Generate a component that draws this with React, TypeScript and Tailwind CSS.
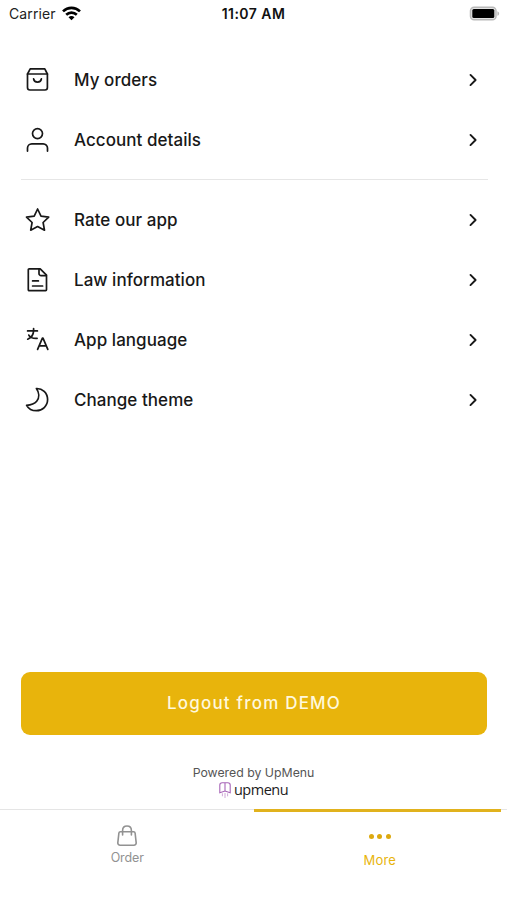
import React from 'react';

type IconProps = { children: React.ReactNode };

const MenuIcon = ({ children }: IconProps) => (
  <svg
    className="h-[26px] w-[26px]"
    viewBox="0 0 26 26"
    fill="none"
    stroke="currentColor"
    strokeWidth={1.7}
    strokeLinecap="round"
    strokeLinejoin="round"
  >
    {children}
  </svg>
);

const OrdersIcon = () => (
  <MenuIcon>
    <path d="M5.2 1.9h14.6L22.4 7v13.6a2.4 2.4 0 0 1-2.4 2.4H4.9a2.4 2.4 0 0 1-2.4-2.4V7Z" />
    <path d="M2.5 7h19.9M8.6 11.9c.6 4.2 7.2 4.2 7.8 0" />
  </MenuIcon>
);

const AccountIcon = () => (
  <MenuIcon>
    <circle cx="12.5" cy="6.6" r="5" />
    <path d="M2.5 24.1v-3a4.3 4.3 0 0 1 4.3-4.3h11.4a4.3 4.3 0 0 1 4.3 4.3v3" />
  </MenuIcon>
);

const StarIcon = () => (
  <MenuIcon>
    <path d="M12.6 2l3.4 7.1 7.7 1-5.6 5.4 1.4 7.7-6.9-3.7-6.9 3.7 1.4-7.7-5.6-5.4 7.7-1Z" />
  </MenuIcon>
);

const LawIcon = () => (
  <MenuIcon>
    <path d="M4.2 1.8h11l6.3 6.4v14.5a.9.9 0 0 1-.9.9H4.2a.9.9 0 0 1-.9-.9v-20a.9.9 0 0 1 .9-.9Z" />
    <path d="M14 2.1v4.4a2.1 2.1 0 0 0 2.1 2.1h5.2M7.6 13.9h5.8M7.6 19h10" />
  </MenuIcon>
);

const LanguageIcon = () => (
  <MenuIcon>
    <path d="M2.6 3.9h9.8M8.6 1.5v2.4M8.6 3.9c-.2 4.1-2.3 6.9-5.9 8.3M3.8 8.1c1.4 2.8 4.3 3.5 8.3 3.3" />
    <path d="M12.6 22.4l4.8-11.2h.6l4.8 11.2M14.2 18.9h7" />
  </MenuIcon>
);

const MoonIcon = () => (
  <MenuIcon>
    <path d="M11.4 1.5c5.8-.3 11.2 4.4 11.2 11.1 0 6.4-5.2 11.1-11.2 11.1-4.3 0-7.9-2-9.8-5.4 4.5-.2 7.9-1.3 10.1-4 2.9-3.6 2.6-8.7-.3-12.8Z" />
  </MenuIcon>
);

const Chevron = () => (
  <svg className="h-3.5 w-2.5" viewBox="0 0 10 14" fill="none" stroke="currentColor" strokeWidth={1.9}>
    <path d="M2.5 1.9L7.6 7l-5.1 5.1" strokeLinecap="round" strokeLinejoin="round" />
  </svg>
);

const accountItems = [
  { label: 'My orders', icon: OrdersIcon },
  { label: 'Account details', icon: AccountIcon },
];

const appItems = [
  { label: 'Rate our app', icon: StarIcon },
  { label: 'Law information', icon: LawIcon },
  { label: 'App language', icon: LanguageIcon },
  { label: 'Change theme', icon: MoonIcon },
];

const MenuRow = ({ label, icon: Icon }: { label: string; icon: () => React.ReactNode }) => (
  <button className="flex h-[60px] w-full items-center pr-[29px] pl-[25px] text-[#181818]">
    <Icon />
    <span className="ml-[23px] flex-1 text-left text-[17px] leading-6 font-medium tracking-[0.05px]">
      {label}
    </span>
    <Chevron />
  </button>
);

const StatusBar = () => (
  <div className="grid h-[27px] grid-cols-3 items-center pr-[7px] pl-[9px] text-sm">
    <div className="flex items-center gap-1.5 text-[#222]">
      <span className="tracking-[0.1px]">Carrier</span>
      <svg className="h-[15px] w-[19px]" viewBox="0 0 19 15" fill="none" stroke="#000" strokeWidth={2.6}>
        <path d="M1 5.4C5.8.7 13.2.7 18 5.4M4.2 8.8c3-2.9 7.6-2.9 10.6 0" />
        <path d="M9.5 14.2l-3-3c1.7-1.6 4.3-1.6 6 0Z" fill="#000" stroke="none" />
      </svg>
    </div>
    <span className="-ml-0.5 text-center font-semibold tracking-[0.45px] text-[#111]">11:07 AM</span>
    <svg className="h-4 w-[31px] justify-self-end" viewBox="0 0 31 16">
      <rect x="1.5" y="1.2" width="25.5" height="12.6" rx="3.6" fill="#e4e4e4" stroke="#b9b9b9" strokeWidth={1.5} />
      <rect x="3.3" y="3" width="22" height="9" rx="1.5" fill="#000" />
      <path d="M28.4 5.2c2.3.8 2.3 3.8 0 4.6Z" fill="#b9b9b9" />
    </svg>
  </div>
);

export default function App() {
  return (
    <div className="flex h-[900px] w-full flex-col bg-white font-['Inter','Liberation_Sans',sans-serif]">
      <StatusBar />

      <div className="mt-[23px]">
        {accountItems.map((item) => (
          <MenuRow key={item.label} label={item.label} icon={item.icon} />
        ))}
        <div className="mr-[19px] mb-2.5 ml-[21px] pt-[9px]">
          <div className="h-px bg-[#e6e6e6]" />
        </div>
        {appItems.map((item) => (
          <MenuRow key={item.label} label={item.label} icon={item.icon} />
        ))}
      </div>

      <div className="mt-auto">
        <div className="pr-5 pl-[21px]">
          <button className="h-[63px] w-full rounded-[9px] bg-[#e8b40c] pt-px text-[17px] font-medium tracking-[1.2px] text-[#fff8dc]">
            Logout from DEMO
          </button>
        </div>

        <div className="mt-[30px] flex flex-col items-center">
          <span className="text-[12.3px] leading-4 text-[#555]">Powered by UpMenu</span>
          <div className="flex h-[17px] items-center gap-[3px]">
            <svg className="h-4 w-3" viewBox="0 0 12 16" fill="none" stroke="#a866b8" strokeWidth={1.1}>
              <path d="M.8 10.7V3C.8 1.6 1.8.8 3.2.8h5.6c1.4 0 2.4.8 2.4 2.2v7.7L6 9 .8 10.7ZM6 .8V9" />
              <path d="M3.4 11.3v3M6 11v5M8.6 11.3v3" strokeWidth={0.8} opacity={0.7} />
            </svg>
            <span className="font-['Open_Sans','Noto_Sans',sans-serif] text-[14.5px] leading-4 font-medium tracking-[-0.5px] text-[#1c1c1c]">
              upmenu
            </span>
          </div>
        </div>
      </div>

      <nav className="mt-[11px] grid h-[91px] shrink-0 grid-cols-2 border-t border-[#e5e5e5] text-[12.5px]">
        <button className="flex flex-col items-center pt-[15px] pl-px text-[#929292]">
          <svg className="h-[22px] w-[22px]" viewBox="0 0 22 22" fill="none" stroke="currentColor" strokeWidth={1.6}>
            <path d="M4.4 6.7h13.2a1.5 1.5 0 0 1 1.5 1.3l1.1 9.8a2.3 2.3 0 0 1-2.3 2.5H4.1a2.3 2.3 0 0 1-2.3-2.5L2.9 8a1.5 1.5 0 0 1 1.5-1.3Z" />
            <path d="M6.6 10V5.5C6.6 2.8 8.3 1 11 1s4.4 1.8 4.4 4.5V10" strokeLinecap="round" />
          </svg>
          <span className="mt-[3px] leading-4 tracking-[-0.1px]">Order</span>
        </button>
        <button className="-mt-px mr-1.5 flex flex-col items-center border-t-3 border-[#e1b21d] pl-[5px] text-[#e8b40c]">
          <span className="mt-[22px] flex gap-[3.5px]">
            <span className="h-[5px] w-[5px] rounded-full bg-[#dda90f]" />
            <span className="h-[5px] w-[5px] rounded-full bg-[#dda90f]" />
            <span className="h-[5px] w-[5px] rounded-full bg-[#dda90f]" />
          </span>
          <span className="mt-[13px] text-[13px] leading-4 tracking-[0.2px]">More</span>
        </button>
      </nav>
    </div>
  );
}
